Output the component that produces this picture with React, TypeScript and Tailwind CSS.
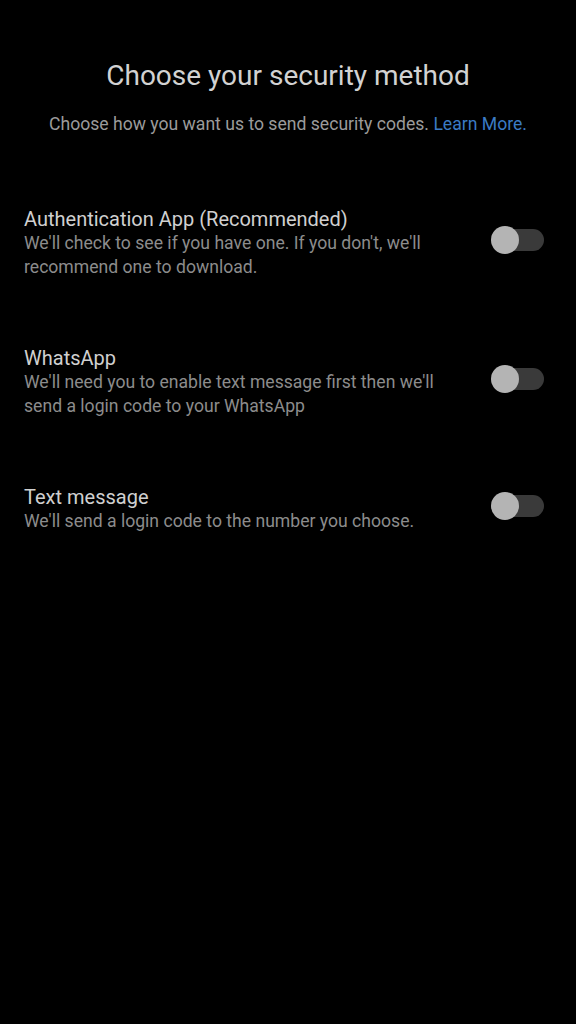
import React, { useState } from 'react';

const methods = [
  {
    id: 'app',
    title: 'Authentication App (Recommended)',
    desc: "We'll check to see if you have one. If you don't, we'll recommend one to download.",
  },
  {
    id: 'whatsapp',
    title: 'WhatsApp',
    desc: "We'll need you to enable text message first then we'll send a login code to your WhatsApp",
  },
  {
    id: 'sms',
    title: 'Text message',
    desc: "We'll send a login code to the number you choose.",
  },
];

const Toggle = ({ on, onClick }: { on: boolean; onClick: () => void }) => (
  <button onClick={onClick} className="relative w-[54px] h-[30px] shrink-0">
    <span className="absolute left-[8px] right-[1px] top-[4px] h-[22px] rounded-full bg-[#3a3a3a]" />
    <span
      className={`absolute top-[1px] w-[28px] h-[28px] rounded-full bg-[#b4b4b4] ${on ? 'left-[26px]' : 'left-0'}`}
    />
  </button>
);

const App = () => {
  const [enabled, setEnabled] = useState<Record<string, boolean>>({});

  return (
    <div className="min-h-[1024px] w-full bg-black font-['Roboto','Liberation_Sans',sans-serif] pt-[58px]">
      <h1 className="text-center text-[28px] leading-[36px] text-[#d2d2d2]">Choose your security method</h1>
      <p className="text-center text-[17.6px] leading-[24px] text-[#9b9b9b] mt-[18px]">
        Choose how you want us to send security codes. <span className="text-[#3b7bc4]">Learn More.</span>
      </p>

      <div className="flex flex-col gap-[67px] px-[24px] mt-[71px]">
        {methods.map((m) => (
          <div key={m.id} className="flex items-center justify-between">
            <div className="max-w-[450px]">
              <div className="text-[20px] leading-[24px] text-[#d0d0d0]">{m.title}</div>
              <div className="text-[17.6px] leading-[24px] text-[#8c8c8c]">{m.desc}</div>
            </div>
            <div className="mr-[7px]">
              <Toggle on={!!enabled[m.id]} onClick={() => setEnabled((s) => ({ ...s, [m.id]: !s[m.id] }))} />
            </div>
          </div>
        ))}
      </div>
    </div>
  );
};

export default App;
